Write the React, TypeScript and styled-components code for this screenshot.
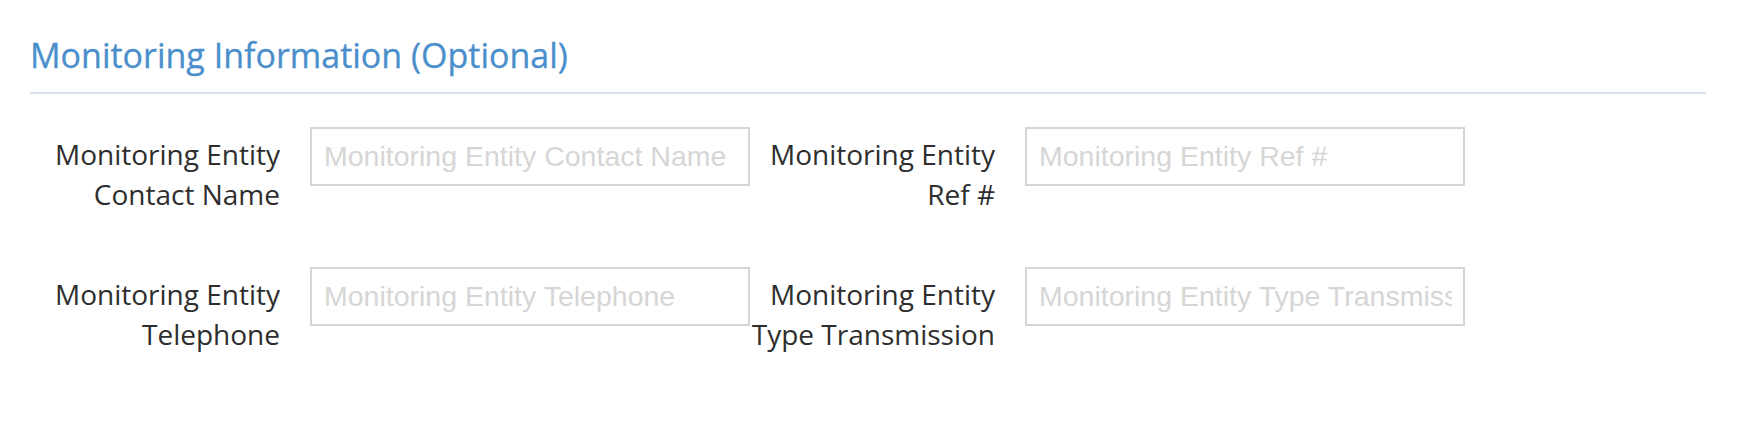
import React from 'react'
import styled, { createGlobalStyle } from 'styled-components'

const GlobalStyle = createGlobalStyle`
  html,
  body {
    margin: 0;
    padding: 0;
    background: #ffffff;
  }

  body {
    font-family: 'Open Sans', 'Liberation Sans', sans-serif;
    color: #333333;
  }
`

const Section = styled.section`
  padding: 0 42px 0 30px;
`

const SectionTitle = styled.h3`
  margin: 36px 0 0;
  padding-bottom: 18px;
  border-bottom: 2px solid #d6e3ef;
  font-family: 'Open Sans', sans-serif;
  font-weight: 400;
  font-size: 34px;
  line-height: 38px;
  color: #4a8fcb;
  -webkit-text-stroke: 0.3px #4a8fcb;
`

const Fields = styled.div`
  display: flex;
  flex-direction: column;
  gap: 53px;
  padding: 33px 0 0 5px;
`

const FieldRow = styled.div`
  display: flex;
  align-items: flex-start;
`

const Field = styled.div`
  display: flex;
  align-items: flex-start;
`

const Label = styled.label`
  width: 245px;
  margin-right: 30px;
  padding-top: 7px;
  text-align: right;
  font-family: 'Open Sans', sans-serif;
  font-size: 28px;
  line-height: 40px;
  color: #2e2e2e;
`

const Input = styled.input`
  box-sizing: border-box;
  width: 440px;
  height: 59px;
  margin: 0;
  padding: 0 11px 0 12px;
  border: 2px solid #d5d5d5;
  border-radius: 0;
  background: #ffffff;
  font-family: 'Liberation Sans', Arial, sans-serif;
  font-size: 28.5px;
  color: #555555;
  outline: none;

  &::placeholder {
    color: #d6d6d6;
    opacity: 1;
  }
`

type FieldDef = { id: string; label: string; placeholder: string }

const rows: FieldDef[][] = [
  [
    { id: 'contactName', label: 'Monitoring Entity Contact Name', placeholder: 'Monitoring Entity Contact Name' },
    { id: 'refNo', label: 'Monitoring Entity Ref #', placeholder: 'Monitoring Entity Ref #' },
  ],
  [
    { id: 'telephone', label: 'Monitoring Entity Telephone', placeholder: 'Monitoring Entity Telephone' },
    { id: 'typeTransmission', label: 'Monitoring Entity Type Transmission', placeholder: 'Monitoring Entity Type Transmission' },
  ],
]

const App: React.FC = () => {
  return (
    <>
      <GlobalStyle />
      <Section>
        <SectionTitle>Monitoring Information (Optional)</SectionTitle>
        <Fields>
          {rows.map((row, i) => (
            <FieldRow key={i}>
              {row.map(f => (
                <Field key={f.id}>
                  <Label htmlFor={f.id}>{f.label}</Label>
                  <Input id={f.id} type="text" placeholder={f.placeholder} />
                </Field>
              ))}
            </FieldRow>
          ))}
        </Fields>
      </Section>
    </>
  )
}

export default App
